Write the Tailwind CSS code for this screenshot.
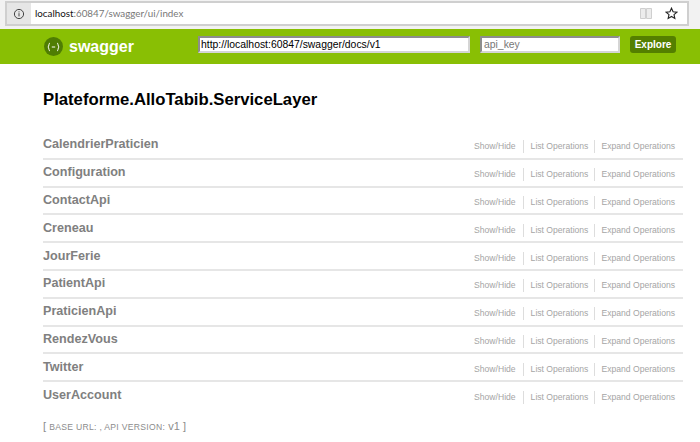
<!DOCTYPE html>
<html lang="en">
  <head>
    <meta charset="UTF-8" />
    <title>Swagger UI</title>
    <script src="https://cdn.jsdelivr.net/npm/@tailwindcss/browser@4"></script>
  </head>
  <body class="w-[700px] h-[442px] overflow-hidden bg-white font-['Liberation_Sans',Arial,sans-serif]">
    <!-- browser address bar -->
    <div class="h-[29px] bg-[#f2f2f2] pl-[5px] pr-[11px] pt-px">
      <div class="h-[25px] flex items-center bg-white border-2 border-[#cfcfcf]">
        <div class="w-[24px] h-full flex items-center justify-center bg-[#e6e6e6]">
          <svg width="12" height="12" viewBox="0 0 12 12" fill="none" stroke="#444" stroke-width="1">
            <circle cx="6" cy="6" r="4.6" />
            <path d="M6 5.2v3.2M6 3.4v1" />
          </svg>
        </div>
        <div class="ml-[4px] text-[9.800px] text-[#777] font-['Lato',sans-serif]"><span class="text-[#111]">localhost</span>:60847/swagger/ui/index</div>
        <div class="ml-auto flex items-center gap-[12px] pr-[9px]">
          <svg width="14" height="13" viewBox="0 0 14 13" fill="#ececec" stroke="#cfcfcf" stroke-width="1">
            <path d="M1.5 1.5h5v10h-5zM7.5 1.5h5v10h-5z" />
          </svg>
          <svg width="13" height="13" viewBox="0 0 14 14" fill="none" stroke="#222" stroke-width="1.2">
            <path d="M7 1.3l1.7 3.8 4.1.4-3.1 2.7.9 4.1L7 10.2l-3.6 2.1.9-4.1-3.1-2.7 4.1-.4z" />
          </svg>
        </div>
      </div>
    </div>

    <!-- swagger header -->
    <div class="h-[35px] bg-[#89bf04] flex items-center pl-[44px]">
      <div class="w-[19px] h-[19px] rounded-full bg-[#4f7d03] flex items-center justify-center">
        <svg width="13" height="10" viewBox="0 0 13 9" fill="none" stroke="#fff" stroke-width="1">
          <path d="M3 .5C1.600.5 2.200 3.800 1 4.500c1.200.7.6 4 2 4M10 .5c1.400 0 .8 3.300 2 4-1.200.7-.6 4-2 4M4.800 4.500h3.400" />
        </svg>
      </div>
      <div class="ml-[6px] w-[129px] text-[16px] font-bold text-white">swagger</div>
      <div class="self-start mt-[7px] w-[272px] h-[17px] bg-white border-2 border-[#8d8d8d] border-b-[#d5d5d5] border-r-[#d5d5d5] pl-px text-[10.400px] leading-[13px] text-black">http://localhost:60847/swagger/docs/v1</div>
      <div class="self-start mt-[7px] ml-[10px] w-[140px] h-[17px] bg-white border-2 border-[#8d8d8d] border-b-[#d5d5d5] border-r-[#d5d5d5] pl-[2px] text-[10.400px] leading-[13px] text-[#777]">api_key</div>
      <div class="self-start mt-[7px] ml-[10px] w-[46px] h-[17px] rounded-[3px] bg-[#547f00] text-center text-[10px] leading-[17px] font-bold text-white">Explore</div>
    </div>

    <div class="pl-[43px] pr-[17px]">
      <h1 class="pt-[26px] h-[68px] text-[16.700px] leading-[20px] font-bold text-black">Plateforme.AlloTabib.ServiceLayer</h1>

      <div>
        <div class="h-[27.800px] flex items-center justify-between border-b-2 border-[#e6e6e6]">
          <div class="text-[12.600px] font-bold text-[#808080]">CalendrierPraticien</div>
          <div class="flex items-center text-[8.600px] text-[#a5a5a5] pr-[8px] pt-[4px]"><span class="pr-[7px] border-r border-[#ddd]">Show/Hide</span><span class="pl-[7px] pr-[6px] border-r border-[#ddd]">List Operations</span><span class="pl-[6px]">Expand Operations</span></div>
        </div>
        <div class="h-[27.800px] flex items-center justify-between border-b-2 border-[#e6e6e6]">
          <div class="text-[12.600px] font-bold text-[#808080]">Configuration</div>
          <div class="flex items-center text-[8.600px] text-[#a5a5a5] pr-[8px] pt-[4px]"><span class="pr-[7px] border-r border-[#ddd]">Show/Hide</span><span class="pl-[7px] pr-[6px] border-r border-[#ddd]">List Operations</span><span class="pl-[6px]">Expand Operations</span></div>
        </div>
        <div class="h-[27.800px] flex items-center justify-between border-b-2 border-[#e6e6e6]">
          <div class="text-[12.600px] font-bold text-[#808080]">ContactApi</div>
          <div class="flex items-center text-[8.600px] text-[#a5a5a5] pr-[8px] pt-[4px]"><span class="pr-[7px] border-r border-[#ddd]">Show/Hide</span><span class="pl-[7px] pr-[6px] border-r border-[#ddd]">List Operations</span><span class="pl-[6px]">Expand Operations</span></div>
        </div>
        <div class="h-[27.800px] flex items-center justify-between border-b-2 border-[#e6e6e6]">
          <div class="text-[12.600px] font-bold text-[#808080]">Creneau</div>
          <div class="flex items-center text-[8.600px] text-[#a5a5a5] pr-[8px] pt-[4px]"><span class="pr-[7px] border-r border-[#ddd]">Show/Hide</span><span class="pl-[7px] pr-[6px] border-r border-[#ddd]">List Operations</span><span class="pl-[6px]">Expand Operations</span></div>
        </div>
        <div class="h-[27.800px] flex items-center justify-between border-b-2 border-[#e6e6e6]">
          <div class="text-[12.600px] font-bold text-[#808080]">JourFerie</div>
          <div class="flex items-center text-[8.600px] text-[#a5a5a5] pr-[8px] pt-[4px]"><span class="pr-[7px] border-r border-[#ddd]">Show/Hide</span><span class="pl-[7px] pr-[6px] border-r border-[#ddd]">List Operations</span><span class="pl-[6px]">Expand Operations</span></div>
        </div>
        <div class="h-[27.800px] flex items-center justify-between border-b-2 border-[#e6e6e6]">
          <div class="text-[12.600px] font-bold text-[#808080]">PatientApi</div>
          <div class="flex items-center text-[8.600px] text-[#a5a5a5] pr-[8px] pt-[4px]"><span class="pr-[7px] border-r border-[#ddd]">Show/Hide</span><span class="pl-[7px] pr-[6px] border-r border-[#ddd]">List Operations</span><span class="pl-[6px]">Expand Operations</span></div>
        </div>
        <div class="h-[27.800px] flex items-center justify-between border-b-2 border-[#e6e6e6]">
          <div class="text-[12.600px] font-bold text-[#808080]">PraticienApi</div>
          <div class="flex items-center text-[8.600px] text-[#a5a5a5] pr-[8px] pt-[4px]"><span class="pr-[7px] border-r border-[#ddd]">Show/Hide</span><span class="pl-[7px] pr-[6px] border-r border-[#ddd]">List Operations</span><span class="pl-[6px]">Expand Operations</span></div>
        </div>
        <div class="h-[27.800px] flex items-center justify-between border-b-2 border-[#e6e6e6]">
          <div class="text-[12.600px] font-bold text-[#808080]">RendezVous</div>
          <div class="flex items-center text-[8.600px] text-[#a5a5a5] pr-[8px] pt-[4px]"><span class="pr-[7px] border-r border-[#ddd]">Show/Hide</span><span class="pl-[7px] pr-[6px] border-r border-[#ddd]">List Operations</span><span class="pl-[6px]">Expand Operations</span></div>
        </div>
        <div class="h-[27.800px] flex items-center justify-between border-b-2 border-[#e6e6e6]">
          <div class="text-[12.600px] font-bold text-[#808080]">Twitter</div>
          <div class="flex items-center text-[8.600px] text-[#a5a5a5] pr-[8px] pt-[4px]"><span class="pr-[7px] border-r border-[#ddd]">Show/Hide</span><span class="pl-[7px] pr-[6px] border-r border-[#ddd]">List Operations</span><span class="pl-[6px]">Expand Operations</span></div>
        </div>
        <div class="h-[27.800px] flex items-center justify-between border-b-2 border-transparent">
          <div class="text-[12.600px] font-bold text-[#808080]">UserAccount</div>
          <div class="flex items-center text-[8.600px] text-[#a5a5a5] pr-[8px] pt-[4px]"><span class="pr-[7px] border-r border-[#ddd]">Show/Hide</span><span class="pl-[7px] pr-[6px] border-r border-[#ddd]">List Operations</span><span class="pl-[6px]">Expand Operations</span></div>
        </div>
      </div>

      <div class="mt-[9px] text-[11px] leading-[14px] text-[#8c8c8c]">[ <span class="text-[8.600px] tracking-[0.3px]">BASE URL: , API VERSION:</span> v1 ]</div>
    </div>
  </body>
</html>
